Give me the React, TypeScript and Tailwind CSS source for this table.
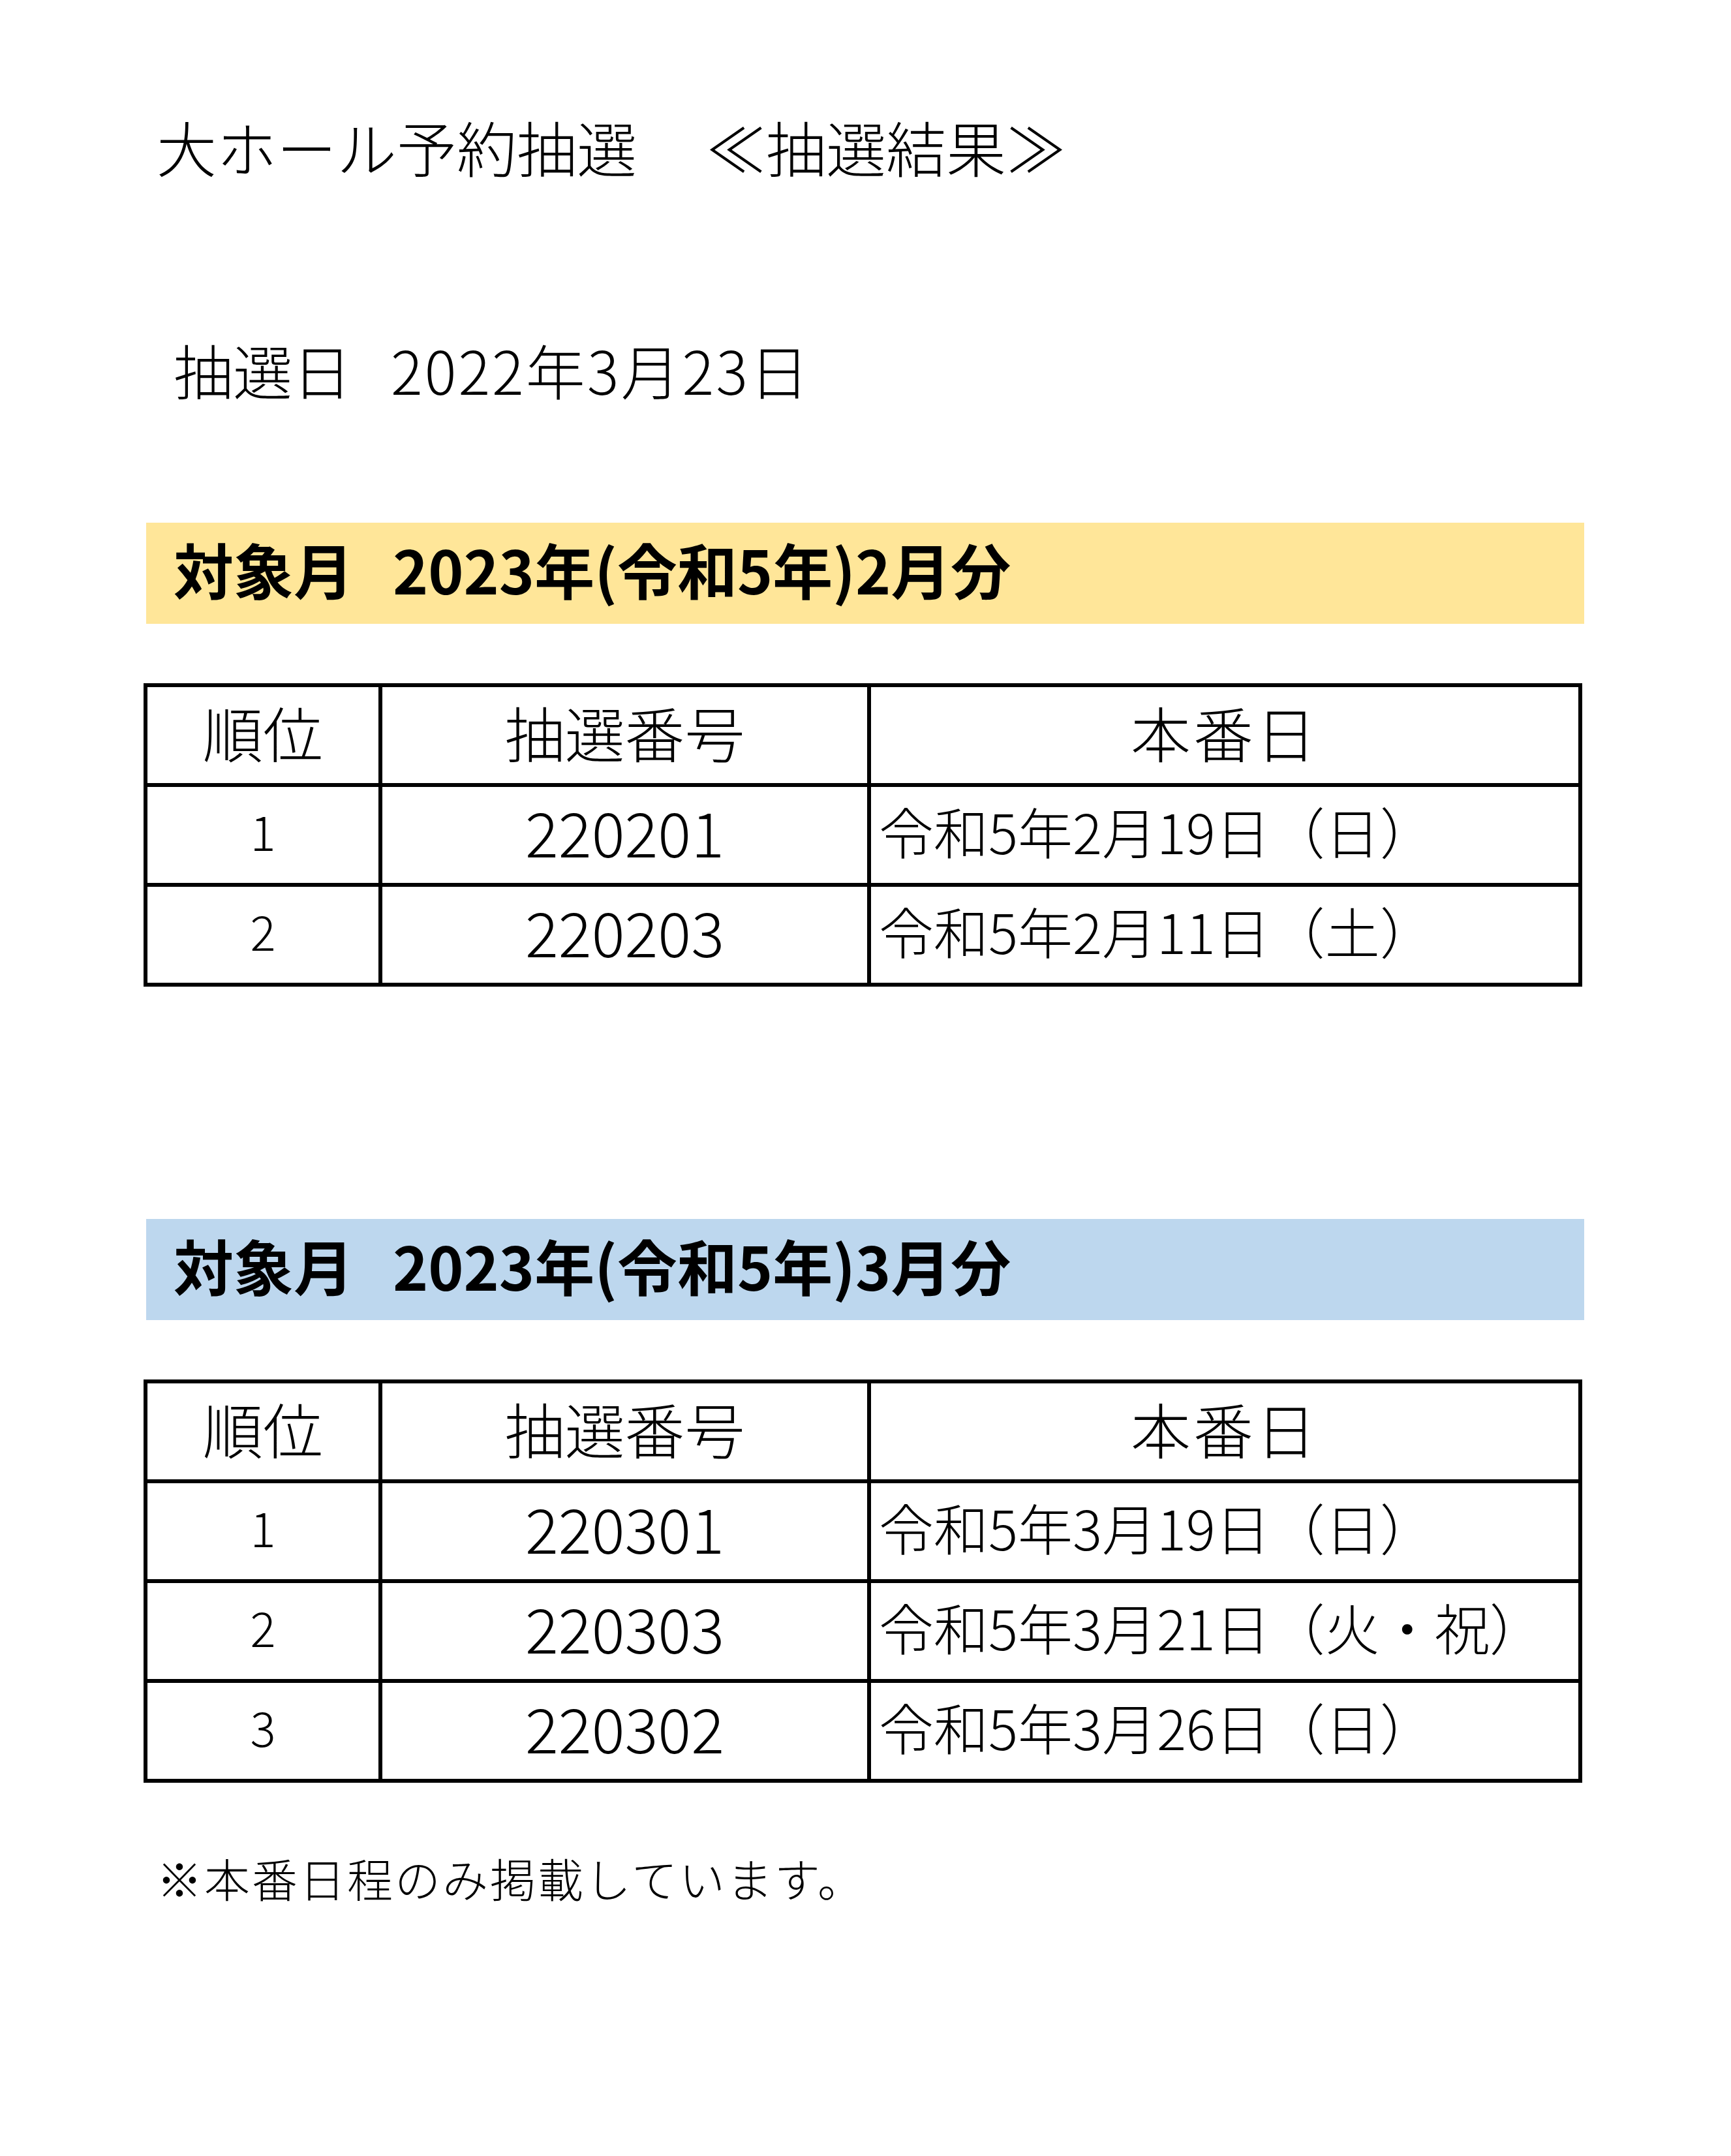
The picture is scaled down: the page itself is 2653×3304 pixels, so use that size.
import React from "react";

const font = { fontFamily: '"Noto Sans CJK JP", "Noto Sans", sans-serif' };

type Row = { rank: string; num: string; date: string };

function Band({ color, label }: { color: string; label: string }) {
  return (
    <div
      className={`ml-[224px] w-[2204px] h-[155px] flex items-center pl-[42px] pb-[16px] text-[92px] leading-none font-bold text-black ${color}`}
    >
      <span>対象月</span>
      <span className="ml-[60px]">{label}</span>
    </div>
  );
}

function Table({ rows }: { rows: Row[] }) {
  return (
    <div className="ml-[220px] w-[2205px] grid grid-cols-[354px_743px_1084px] gap-[6px] p-[6px] bg-black font-light">
      <div className="bg-white h-[147px] flex items-center justify-center pb-[11px] text-[92px] leading-none">順位</div>
      <div className="bg-white h-[147px] flex items-center justify-center pb-[11px] text-[92px] leading-none">抽選番号</div>
      <div className="bg-white h-[147px] flex items-center justify-center pb-[11px] text-[92px] leading-none tracking-[4px]">本番日</div>
      {rows.map((r) => (
        <React.Fragment key={r.num}>
          <div className="bg-white h-[147px] flex items-center justify-center pb-[14px] text-[73px] leading-none">{r.rank}</div>
          <div className="bg-white h-[147px] flex items-center justify-center pb-[14px] text-[95px] leading-none">{r.num}</div>
          <div className="bg-white h-[147px] flex items-center pl-[12px] pb-[14px] text-[84px] leading-none">{r.date}</div>
        </React.Fragment>
      ))}
    </div>
  );
}

export default function App() {
  const feb: Row[] = [
    { rank: "1", num: "220201", date: "令和5年2月19日（日）" },
    { rank: "2", num: "220203", date: "令和5年2月11日（土）" },
  ];
  const mar: Row[] = [
    { rank: "1", num: "220301", date: "令和5年3月19日（日）" },
    { rank: "2", num: "220303", date: "令和5年3月21日（火・祝）" },
    { rank: "3", num: "220302", date: "令和5年3月26日（日）" },
  ];
  return (
    <div className="w-[2653px] h-[3304px] bg-white text-black overflow-hidden" style={font}>
      <div className="flex flex-col">
        <div className="mt-[174px] h-[100px] flex items-center pl-[240px] text-[92px] leading-none font-light">
          <span>大ホール予約抽選</span>
          <span className="ml-[106px]">≪抽選結果≫</span>
        </div>
        <div className="mt-[241px] h-[100px] flex items-center pl-[266px] text-[91px] leading-none font-light">
          <span>抽選日</span>
          <span className="ml-[60px] tracking-[3px]">2022年3月23日</span>
        </div>
        <div className="mt-[186px]">
          <Band color="bg-[#FFE699]" label="2023年(令和5年)2月分" />
        </div>
        <div className="mt-[91px]">
          <Table rows={feb} />
        </div>
        <div className="mt-[356px]">
          <Band color="bg-[#BDD7EE]" label="2023年(令和5年)3月分" />
        </div>
        <div className="mt-[91px]">
          <Table rows={mar} />
        </div>
        <div className="mt-[106px] h-[80px] flex items-center pl-[240px] text-[70px] leading-none tracking-[3px] font-light">
          ※本番日程のみ掲載しています。
        </div>
      </div>
    </div>
  );
}
